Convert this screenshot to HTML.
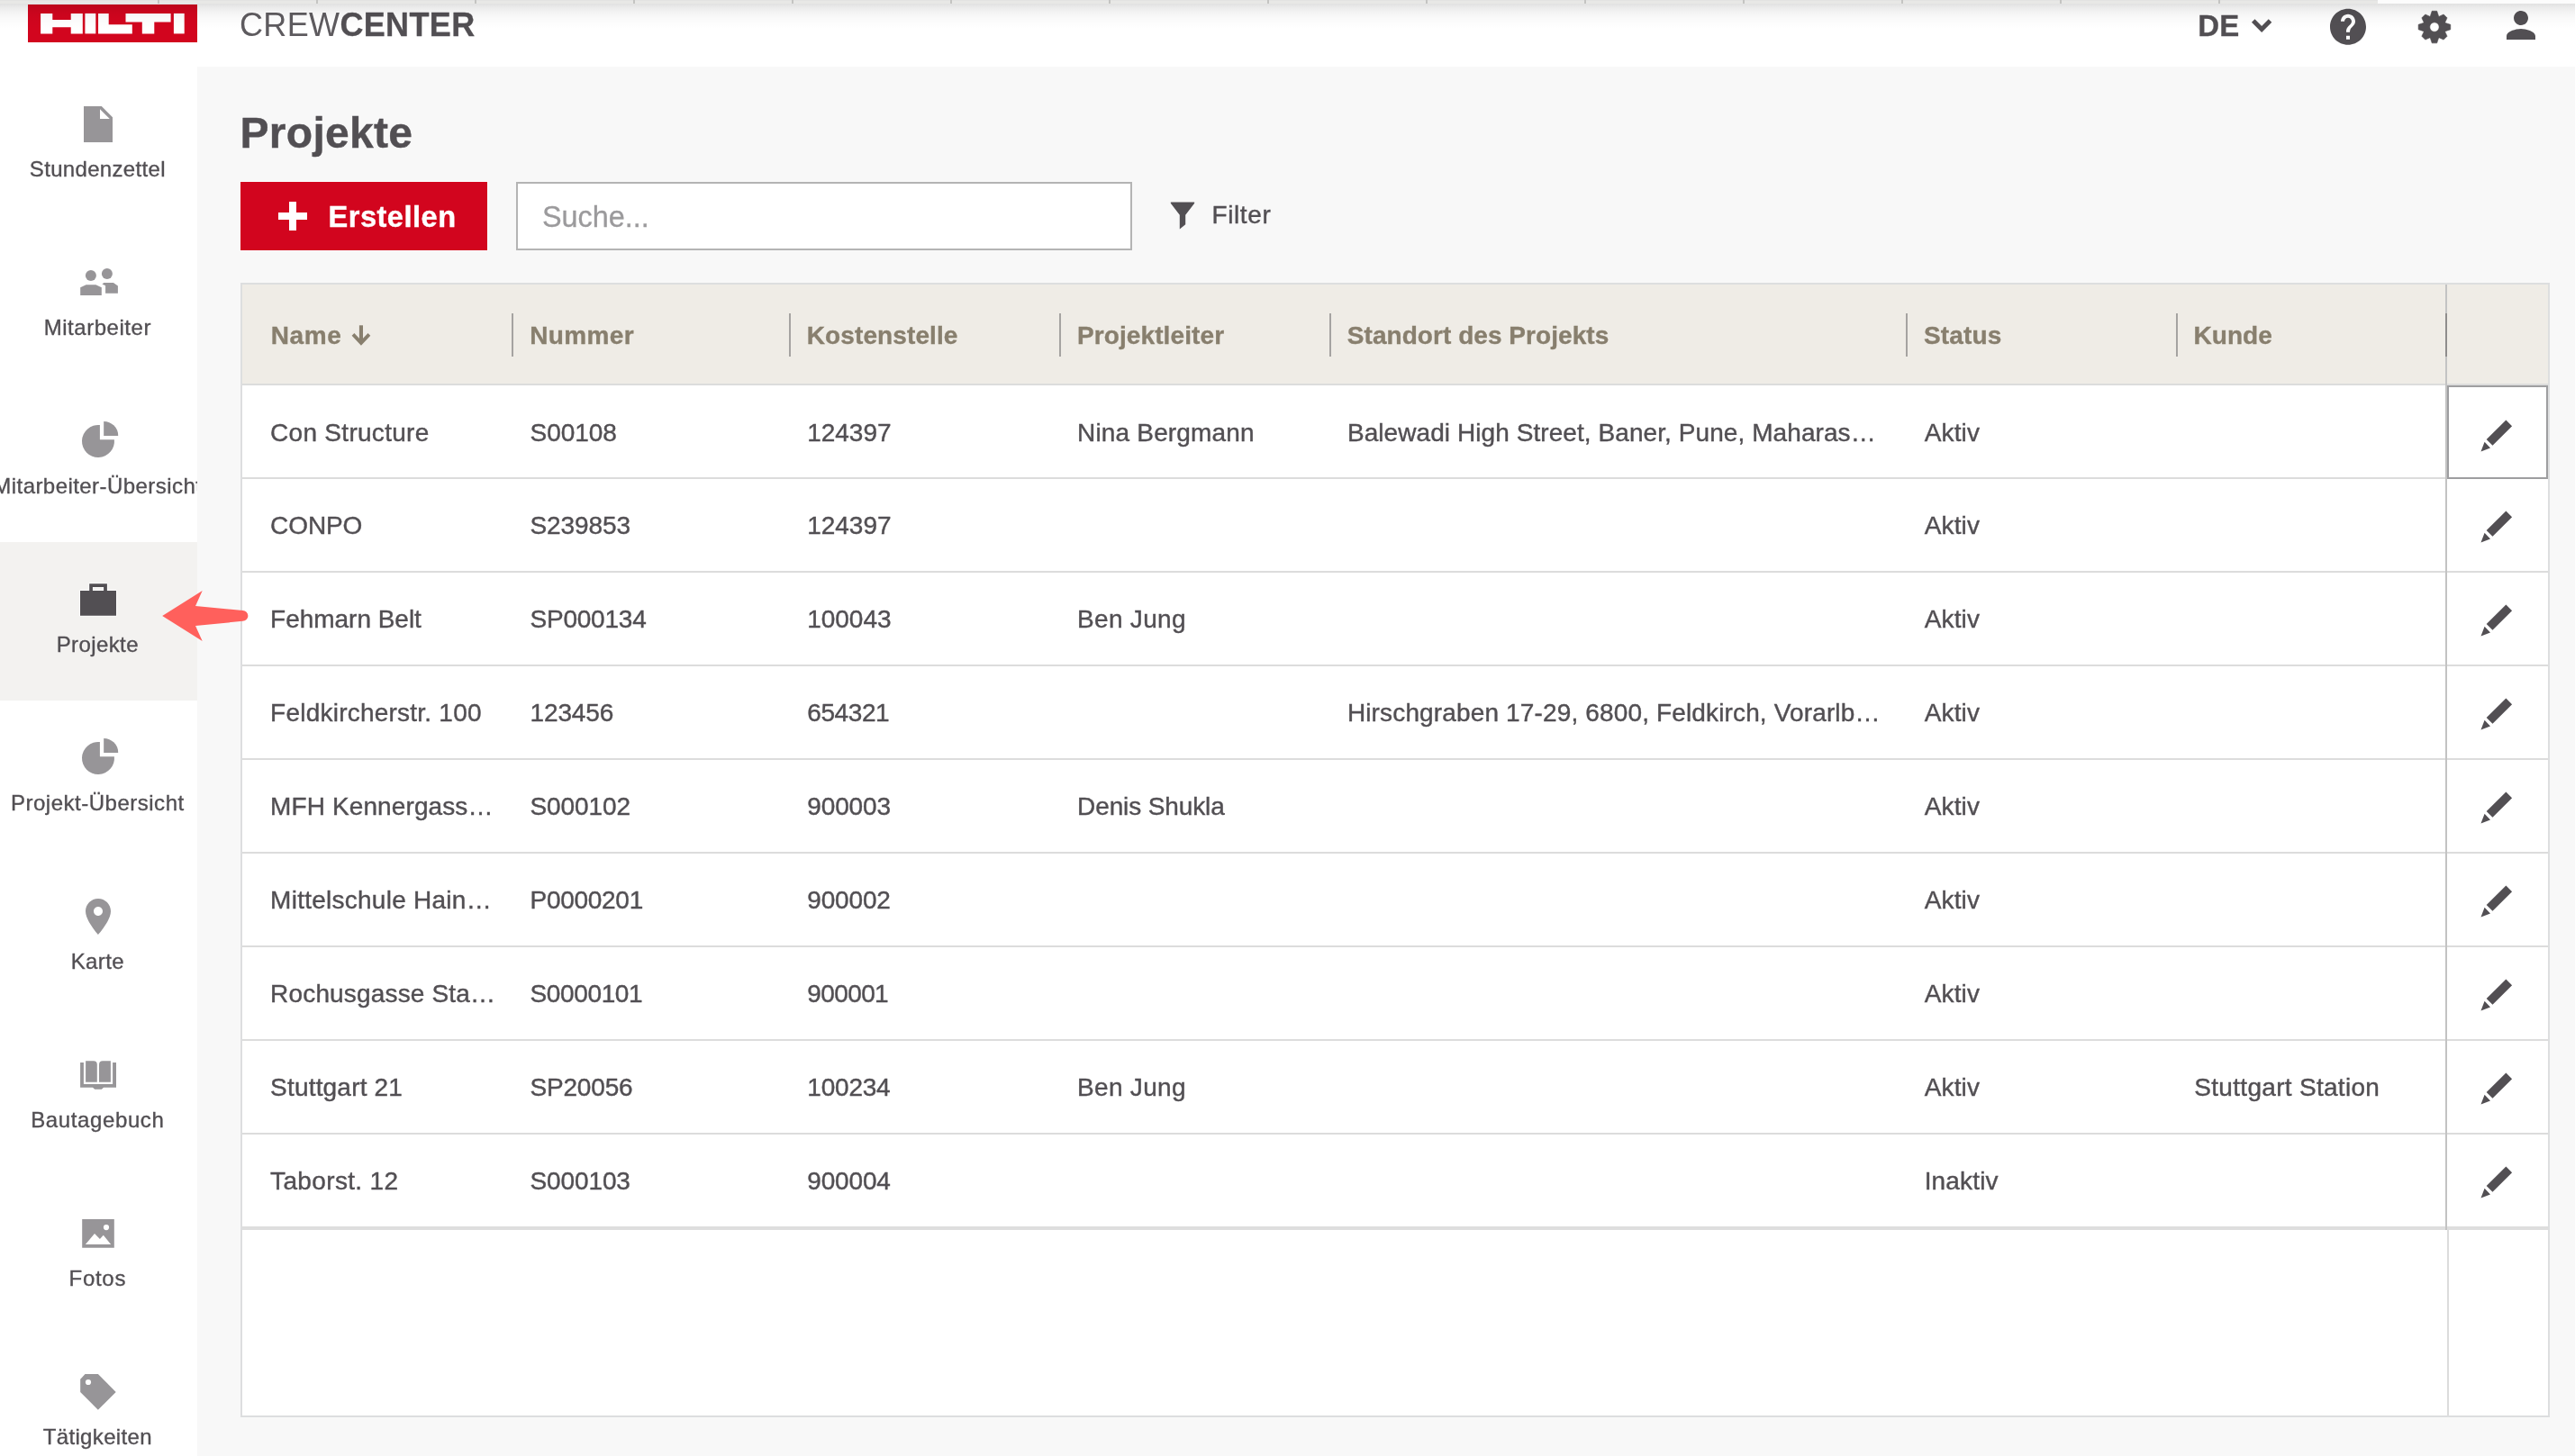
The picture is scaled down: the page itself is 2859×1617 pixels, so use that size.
<!DOCTYPE html>
<html lang="de"><head><meta charset="utf-8"><title>Projekte</title>
<style>
*{box-sizing:border-box;margin:0;padding:0}
html,body{width:2859px;height:1617px;background:#f8f8f8;font-family:"Liberation Sans",sans-serif;color:#524f53}
body{position:relative}
#wrap{position:absolute;left:0;top:0;width:2859px;height:1617px;will-change:transform;overflow:hidden}
.abs{position:absolute}
#hdr{position:absolute;left:0;top:0;width:2859px;height:74px;background:#fff}
#strip{position:absolute;left:0;top:0;width:2859px;height:4px;background:#e8e8e6;border-top:1px solid #e2e2e2}
#strip i{position:absolute;top:-1px;width:2px;height:4px;background:#c4c4c2}
#stripw{position:absolute;left:2640px;top:0;width:219px;height:4px;background:#fcfcfc}
#shadow{position:absolute;left:0;top:4px;width:2859px;height:30px;background:linear-gradient(to bottom,rgba(0,0,0,.118) 0,rgba(0,0,0,.075) 5px,rgba(0,0,0,.043) 10px,rgba(0,0,0,.02) 17px,rgba(0,0,0,0) 28px);z-index:50}
#logo{position:absolute;left:31px;top:5px;width:188px;height:42px;background:#d2051e}
#brand{position:absolute;left:266px;top:6px;font-size:36px;line-height:44px;letter-spacing:.35px;white-space:nowrap;color:#5e5b5f}
#brand b{font-weight:bold;color:#524f53;-webkit-text-stroke:.3px #524f53}
#lang{position:absolute;left:2440.300px;top:7px;font-size:33px;-webkit-text-stroke:.3px #524f53;line-height:44px;font-weight:bold;white-space:nowrap}
#side{position:absolute;left:0;top:74px;width:219px;height:1543px;background:#fff;overflow:hidden}
.nav{position:absolute;left:0;width:219px;height:176px;overflow:hidden}
.nav.on{background:#f3f2f0}
.nav svg{position:absolute;left:85px;top:40px;width:48px;height:48px;overflow:visible}
.nav .lb{position:absolute;left:-41.200px;width:299px;top:100px;text-align:center;font-size:24px;line-height:28px;white-space:nowrap;color:#524f53;letter-spacing:.25px;-webkit-text-stroke:.35px #524f53}
h1{position:absolute;left:266.500px;top:120px;font-size:48px;line-height:56px;font-weight:bold;white-space:nowrap;color:#524f53;letter-spacing:.3px;-webkit-text-stroke:.4px #524f53}
#btn{position:absolute;left:267px;top:202px;width:274px;height:76px;background:#d2051e;color:#fff;box-shadow:0 0 0 1px rgba(255,255,255,.75)}
#btn span{position:absolute;left:97.500px;top:19px;font-size:32.600px;line-height:40px;font-weight:bold;letter-spacing:.5px;white-space:nowrap;-webkit-text-stroke:.4px #fff}
#btn i{position:absolute;background:#fff}
#search{position:absolute;left:573px;top:202px;width:684px;height:76px;background:#fff;border:2px solid #b4b4b4}
#search span{position:absolute;left:27px;top:16.500px;font-size:32.400px;line-height:40px;color:#9b9a9c;white-space:nowrap;letter-spacing:0;-webkit-text-stroke:.3px #9b9a9c}
#filter{position:absolute;left:1345.500px;top:221px;font-size:28px;line-height:36px;white-space:nowrap;letter-spacing:.6px;-webkit-text-stroke:.4px #524f53}
#grid{position:absolute;left:267px;top:314px;width:2564px;height:1260px;background:#fff;border:2px solid #dddedf}
#ghead{position:absolute;left:0;top:0;width:2560px;height:112px;background:#efece6;border-bottom:2px solid #dcdcdc}
.th{position:absolute;top:39px;-webkit-text-stroke:.35px #887f6e;letter-spacing:.15px;font-size:28px;line-height:36px;font-weight:bold;color:#887f6e;white-space:nowrap}
.sep{position:absolute;top:32px;width:2px;height:48px;background:#a5a3a1}
.row{position:absolute;left:0;width:2560px;height:104px;border-bottom:2px solid #dcdcdc}
.row.last{height:106px;border-bottom:4px solid #dedede}
.row.r .td{top:34px}
.td{position:absolute;top:35px;font-size:28px;line-height:36px;white-space:nowrap;color:#524f53;letter-spacing:.15px;-webkit-text-stroke:.4px #524f53}
#pin{position:absolute;left:2446px;top:0;width:2px;height:1050px;background:#c3c3c3}
#pin2{position:absolute;left:2448px;top:1050px;width:2px;height:206px;background:#dcdcdc}
#focus{position:absolute;left:2448px;top:112px;width:112px;height:104px;border:2px solid #9e9ea0}
.pen{position:absolute;left:2485px;width:36px;height:36px;overflow:visible}
</style></head>
<body>
<div id="wrap">
<div id="hdr">
<div id="strip">
<i style="left:175px"></i>
<i style="left:351px"></i>
<i style="left:527px"></i>
<i style="left:703px"></i>
<i style="left:879px"></i>
<i style="left:1055px"></i>
<i style="left:1231px"></i>
<i style="left:1407px"></i>
<i style="left:1583px"></i>
<i style="left:1759px"></i>
<i style="left:1935px"></i>
<i style="left:2111px"></i>
<i style="left:2287px"></i>
<i style="left:2463px"></i>
</div><div id="stripw"></div>
<div id="logo"><svg class="abs" style="left:0;top:0" width="188" height="42" viewBox="31 5 188 42"><g fill="#fff">
<path d="M45.100 14.900H58.300V21.900H78.700V14.900H91.800V37.400H78.700V30.300H58.300V37.400H45.100Z"/>
<rect x="94.400" y="14.900" width="11.900" height="22.500"/>
<path d="M109.050 14.900H120.700V27.300H146.800V37.400H109.050Z"/>
<path d="M139.500 14.900H189.600V24.500H171.300V37.400H157.800V24.500H139.500Z"/>
<rect x="192.900" y="14.900" width="11.800" height="22.500"/>
</g></svg></div>
<div id="brand">CREW<b>CENTER</b></div>
<div id="lang">DE</div>
<svg class="abs" style="left:2480px;top:0" width="379" height="74" viewBox="2480 0 379 74">
<polyline points="2501.770,23.070 2511.150,32.500 2520.530,23.070" fill="none" stroke="#524f53" stroke-width="5"/>
<g transform="translate(2583 5.850) scale(2)"><path d="M12 2C6.480 2 2 6.480 2 12s4.480 10 10 10 10-4.480 10-10S17.520 2 12 2zm1 17h-2v-2h2v2zm2.070-7.750l-.9.920C13.450 12.900 13 13.500 13 15h-2v-.500c0-1.100.450-2.100 1.170-2.830l1.240-1.260c.370-.360.590-.860.590-1.410 0-1.100-.9-2-2-2s-2 .9-2 2H8c0-2.210 1.790-4 4-4s4 1.790 4 4c0 .880-.360 1.680-.930 2.250z" fill="#524f53"/></g>
<path d="M2698.35 17.89L2700.20 12.25 L2705.70 12.25 L2707.55 17.89A13.00 13.00 0 0 1 2708.29 18.20L2713.13 15.98 L2717.02 19.87 L2714.80 24.71A13.00 13.00 0 0 1 2715.11 25.45L2720.75 27.30 L2720.75 32.80 L2715.11 34.65A13.00 13.00 0 0 1 2714.80 35.39L2717.02 40.23 L2713.13 44.12 L2708.29 41.90A13.00 13.00 0 0 1 2707.55 42.21L2705.70 47.85 L2700.20 47.85 L2698.35 42.21A13.00 13.00 0 0 1 2697.61 41.90L2692.77 44.12 L2688.88 40.23 L2691.10 35.39A13.00 13.00 0 0 1 2690.79 34.65L2685.15 32.80 L2685.15 27.30 L2690.79 25.45A13.00 13.00 0 0 1 2691.10 24.71L2688.88 19.87 L2692.77 15.98 L2697.61 18.20A13.00 13.00 0 0 1 2698.35 17.89 ZM2697.75 30.05 a5.20 5.20 0 1 0 10.40 0 a5.20 5.20 0 1 0 -10.40 0Z" fill="#524f53" fill-rule="evenodd" stroke="#524f53" stroke-width=".6" stroke-linejoin="round"/>
<g transform="translate(2775 4) scale(2)"><path d="M12 12c2.210 0 4-1.790 4-4s-1.790-4-4-4-4 1.790-4 4 1.790 4 4 4zm0 2c-2.670 0-8 1.340-8 4v2h16v-2c0-2.660-5.330-4-8-4z" fill="#524f53"/></g>
</svg>
</div>
<div id="shadow"></div>
<div id="side">
<div class="nav" style="top:0px"><svg viewBox="0 0 48 48" ><path d="M8 4H27.8L40 16.2V44H8ZM26 7.3V18H36.8Z" fill="#979598" fill-rule="evenodd" /></svg><div class="lb" style="letter-spacing:0.32px">Stundenzettel</div></div>
<div class="nav" style="top:176px"><svg viewBox="0 0 48 48" ><circle cx="15.9" cy="16" r="6" fill="#979598"/><circle cx="33.9" cy="13.9" r="6" fill="#979598"/><path d="M4.2 37.9V29.3L10.6 26.2H21.4L27.8 29.3V37.9Z" fill="#979598" /><path d="M28.4 25.5L30.4 24.1H40.9L45.9 27.6V35.7H32.1V27.3Z" fill="#979598" /></svg><div class="lb" style="letter-spacing:0.54px">Mitarbeiter</div></div>
<div class="nav" style="top:352px"><svg viewBox="0 0 48 48" ><path d="M25.9 22.2V6.1A18 18 0 1 0 41.9 22.2Z" fill="#979598" /><path d="M30.2 17.9V1.9A16 16 0 0 1 46.2 17.9Z" fill="#979598" /></svg><div class="lb" style="letter-spacing:0.44px">Mitarbeiter-Übersicht</div></div>
<div class="nav on" style="top:528px"><svg viewBox="0 0 48 48" ><path d="M4 14H14.2V6.2H33.9V14H44V41.8H4ZM17.9 9.9V14H30.1V9.9Z" fill="#524f53" fill-rule="evenodd" stroke="#fff" stroke-width="1.4" paint-order="stroke"/></svg><div class="lb" style="letter-spacing:0.4px">Projekte</div></div>
<div class="nav" style="top:704px"><svg viewBox="0 0 48 48" ><path d="M25.9 22.2V6.1A18 18 0 1 0 41.9 22.2Z" fill="#979598" /><path d="M30.2 17.9V1.9A16 16 0 0 1 46.2 17.9Z" fill="#979598" /></svg><div class="lb" style="letter-spacing:0.51px">Projekt-Übersicht</div></div>
<div class="nav" style="top:880px"><svg viewBox="0 0 48 48" ><g transform="scale(2)"><path d="M12 2C8.13 2 5 5.13 5 9c0 5.25 7 13 7 13s7-7.75 7-13c0-3.87-3.13-7-7-7zm0 9.500c-1.380 0-2.500-1.120-2.500-2.500s1.120-2.500 2.500-2.500 2.500 1.120 2.500 2.500-1.120 2.500-2.500 2.500z" fill="#979598" fill-rule="evenodd" /></g></svg><div class="lb" style="letter-spacing:0.35px">Karte</div></div>
<div class="nav" style="top:1056px"><svg viewBox="0 0 48 48" ><path d="M4.1 10.1H7.9V34.1H40.1V10.1H44V37.8H30L27.9 39.8H20.2L18 37.8H4.1Z" fill="#979598" /><path d="M10.1 8.2H18.8Q22.8 8.200 22.8 12.2V31.8H10.1Z" fill="#979598" /><path d="M37.9 8.2H29Q25 8.200 25 12.2V31.8H37.9Z" fill="#979598" /></svg><div class="lb" style="letter-spacing:0.62px">Bautagebuch</div></div>
<div class="nav" style="top:1232px"><svg viewBox="0 0 48 48" ><mask id="sun"><rect width="48" height="48" fill="#fff"/><circle cx="33" cy="17.100" r="3.100" fill="#000"/></mask><g mask="url(#sun)"><path d="M6.2 8.100H41.8V39.8H6.2ZM9.900 36.100H38.100L29.800 25.700 25.900 30 20 23.900Z" fill="#979598" fill-rule="evenodd" /></g></svg><div class="lb" style="letter-spacing:0.72px">Fotos</div></div>
<div class="nav" style="top:1408px"><svg viewBox="0 0 48 48" ><mask id="hole"><rect width="48" height="48" fill="#fff"/><circle cx="13" cy="13" r="3.100" fill="#000"/></mask><g mask="url(#hole)"><path d="M9.500 4H23.900L43.700 23.900 23.900 43.800 4.200 24V9.700Z" fill="#979598" /></g></svg><div class="lb" style="letter-spacing:0.35px">Tätigkeiten</div></div>
</div>
<h1>Projekte</h1>
<div id="btn"><i style="left:54px;top:22px;width:8px;height:32px"></i><i style="left:42px;top:34px;width:32px;height:8px"></i><span>Erstellen</span></div>
<div id="search"><span>Suche...</span></div>
<svg class="abs" style="left:1296px;top:220px" width="36" height="40" viewBox="1296 220 36 40"><path d="M1300.600 224.600H1325.400Q1327 224.600 1326 226L1316.200 238.800V249.300L1309.800 254.600V238.800L1300 226Q1299 224.600 1300.600 224.600Z" fill="#524f53"/></svg>
<div id="filter">Filter</div>
<div id="grid">
<div id="ghead">
<div class="th" style="left:31.8px;letter-spacing:0.55px">Name</div>
<div class="th" style="left:319.2px;letter-spacing:0.35px">Nummer</div>
<div class="th" style="left:626.8px;letter-spacing:0.1px">Kostenstelle</div>
<div class="th" style="left:927px;letter-spacing:0.1px">Projektleiter</div>
<div class="th" style="left:1226.8px;letter-spacing:0.05px">Standort des Projekts</div>
<div class="th" style="left:1867px;letter-spacing:0.15px">Status</div>
<div class="th" style="left:2166.6px;letter-spacing:0px">Kunde</div>
<div class="sep" style="left:299px"></div>
<div class="sep" style="left:607px"></div>
<div class="sep" style="left:907px"></div>
<div class="sep" style="left:1207px"></div>
<div class="sep" style="left:1847px"></div>
<div class="sep" style="left:2147px"></div>
<svg class="abs" style="left:116px;top:40px" width="32" height="32" viewBox="385 356 32 32"><path d="M400.950 361.300V381" fill="none" stroke="#887f6e" stroke-width="4.100"/><path d="M392 371.400L400.950 380.900L409.900 371.400" fill="none" stroke="#887f6e" stroke-width="3.800"/></svg>
</div>
<div class="row" style="top:112px">
<div class="td" style="left:31.1px;letter-spacing:0.283px">Con Structure</div>
<div class="td" style="left:319.5px;letter-spacing:-0.05px">S00108</div>
<div class="td" style="left:627.3px;letter-spacing:-0.05px">124397</div>
<div class="td" style="left:927.1px;letter-spacing:0.166px">Nina Bergmann</div>
<div class="td" style="left:1226.9px;letter-spacing:0.074px">Balewadi High Street, Baner, Pune, Maharas…</div>
<div class="td" style="left:1867.7px;letter-spacing:0.15px">Aktiv</div>
</div>
<div class="row r" style="top:216px">
<div class="td" style="left:31.1px;letter-spacing:-0.1px">CONPO</div>
<div class="td" style="left:319.5px;letter-spacing:-0.083px">S239853</div>
<div class="td" style="left:627.3px;letter-spacing:-0.05px">124397</div>
<div class="td" style="left:1867.7px;letter-spacing:0.15px">Aktiv</div>
</div>
<div class="row r" style="top:320px">
<div class="td" style="left:31.1px;letter-spacing:-0.027px">Fehmarn Belt</div>
<div class="td" style="left:319.5px;letter-spacing:-0.221px">SP000134</div>
<div class="td" style="left:627.3px;letter-spacing:-0.05px">100043</div>
<div class="td" style="left:927.1px;letter-spacing:0.293px">Ben Jung</div>
<div class="td" style="left:1867.7px;letter-spacing:0.15px">Aktiv</div>
</div>
<div class="row r" style="top:424px">
<div class="td" style="left:31.1px;letter-spacing:0.228px">Feldkircherstr. 100</div>
<div class="td" style="left:319.5px;letter-spacing:-0.13px">123456</div>
<div class="td" style="left:627.3px;letter-spacing:-0.41px">654321</div>
<div class="td" style="left:1226.9px;letter-spacing:0.145px">Hirschgraben 17-29, 6800, Feldkirch, Vorarlb…</div>
<div class="td" style="left:1867.7px;letter-spacing:0.15px">Aktiv</div>
</div>
<div class="row r" style="top:528px">
<div class="td" style="left:31.1px;letter-spacing:0.107px">MFH Kennergass…</div>
<div class="td" style="left:319.5px;letter-spacing:-0.083px">S000102</div>
<div class="td" style="left:627.3px;letter-spacing:-0.13px">900003</div>
<div class="td" style="left:927.1px;letter-spacing:-0.123px">Denis Shukla</div>
<div class="td" style="left:1867.7px;letter-spacing:0.15px">Aktiv</div>
</div>
<div class="row r" style="top:632px">
<div class="td" style="left:31.1px;letter-spacing:0.256px">Mittelschule Hain…</div>
<div class="td" style="left:319.5px;letter-spacing:-0.279px">P0000201</div>
<div class="td" style="left:627.3px;letter-spacing:-0.17px">900002</div>
<div class="td" style="left:1867.7px;letter-spacing:0.15px">Aktiv</div>
</div>
<div class="row r" style="top:736px">
<div class="td" style="left:31.1px;letter-spacing:0.163px">Rochusgasse Sta…</div>
<div class="td" style="left:319.5px;letter-spacing:-0.364px">S0000101</div>
<div class="td" style="left:627.3px;letter-spacing:-0.61px">900001</div>
<div class="td" style="left:1867.7px;letter-spacing:0.15px">Aktiv</div>
</div>
<div class="row r" style="top:840px">
<div class="td" style="left:31.1px;letter-spacing:0.187px">Stuttgart 21</div>
<div class="td" style="left:319.5px;letter-spacing:-0.184px">SP20056</div>
<div class="td" style="left:627.3px;letter-spacing:-0.21px">100234</div>
<div class="td" style="left:927.1px;letter-spacing:0.293px">Ben Jung</div>
<div class="td" style="left:1867.7px;letter-spacing:0.15px">Aktiv</div>
<div class="td" style="left:2167.3px;letter-spacing:0.3px">Stuttgart Station</div>
</div>
<div class="row r last" style="top:944px">
<div class="td" style="left:31.1px;letter-spacing:0.35px">Taborst. 12</div>
<div class="td" style="left:319.5px;letter-spacing:-0.116px">S000103</div>
<div class="td" style="left:627.3px;letter-spacing:-0.17px">900004</div>
<div class="td" style="left:1867.7px;letter-spacing:0.15px">Inaktiv</div>
</div>
<div id="pin"></div><div id="pin2"></div>
<div class="abs" style="left:2446px;top:32px;width:2px;height:48px;background:#8f8d8c"></div>
<div id="focus"></div>
<svg class="pen" style="top:149.5px" viewBox="2754 465.500 36 36"><path d="M2782.400 466.100L2789.100 472.700L2767.500 494.200L2760.700 487.600ZM2758.600 490.200L2765 497L2754.500 501Z" fill="#524f53"/></svg>
<svg class="pen" style="top:251.3px" viewBox="2754 465.500 36 36"><path d="M2782.400 466.100L2789.100 472.700L2767.500 494.200L2760.700 487.600ZM2758.600 490.200L2765 497L2754.500 501Z" fill="#524f53"/></svg>
<svg class="pen" style="top:355.3px" viewBox="2754 465.500 36 36"><path d="M2782.400 466.100L2789.100 472.700L2767.500 494.200L2760.700 487.600ZM2758.600 490.200L2765 497L2754.500 501Z" fill="#524f53"/></svg>
<svg class="pen" style="top:459.3px" viewBox="2754 465.500 36 36"><path d="M2782.400 466.100L2789.100 472.700L2767.500 494.200L2760.700 487.600ZM2758.600 490.200L2765 497L2754.500 501Z" fill="#524f53"/></svg>
<svg class="pen" style="top:563.3px" viewBox="2754 465.500 36 36"><path d="M2782.400 466.100L2789.100 472.700L2767.500 494.200L2760.700 487.600ZM2758.600 490.200L2765 497L2754.500 501Z" fill="#524f53"/></svg>
<svg class="pen" style="top:667.3px" viewBox="2754 465.500 36 36"><path d="M2782.400 466.100L2789.100 472.700L2767.500 494.200L2760.700 487.600ZM2758.600 490.200L2765 497L2754.500 501Z" fill="#524f53"/></svg>
<svg class="pen" style="top:771.3px" viewBox="2754 465.500 36 36"><path d="M2782.400 466.100L2789.100 472.700L2767.500 494.200L2760.700 487.600ZM2758.600 490.200L2765 497L2754.500 501Z" fill="#524f53"/></svg>
<svg class="pen" style="top:875.3px" viewBox="2754 465.500 36 36"><path d="M2782.400 466.100L2789.100 472.700L2767.500 494.200L2760.700 487.600ZM2758.600 490.200L2765 497L2754.500 501Z" fill="#524f53"/></svg>
<svg class="pen" style="top:979.3px" viewBox="2754 465.500 36 36"><path d="M2782.400 466.100L2789.100 472.700L2767.500 494.200L2760.700 487.600ZM2758.600 490.200L2765 497L2754.500 501Z" fill="#524f53"/></svg>
</div>
<svg class="abs" style="left:170px;top:640px;z-index:60" width="120" height="90" viewBox="170 640 120 90"><path d="M180.200 684L224.700 656L217 673.100L269.500 678A5.900 5.900 0 0 1 269.500 689.800L217 695L224.700 711.900Z" fill="#ff605c"/></svg>
</div>
</body></html>
